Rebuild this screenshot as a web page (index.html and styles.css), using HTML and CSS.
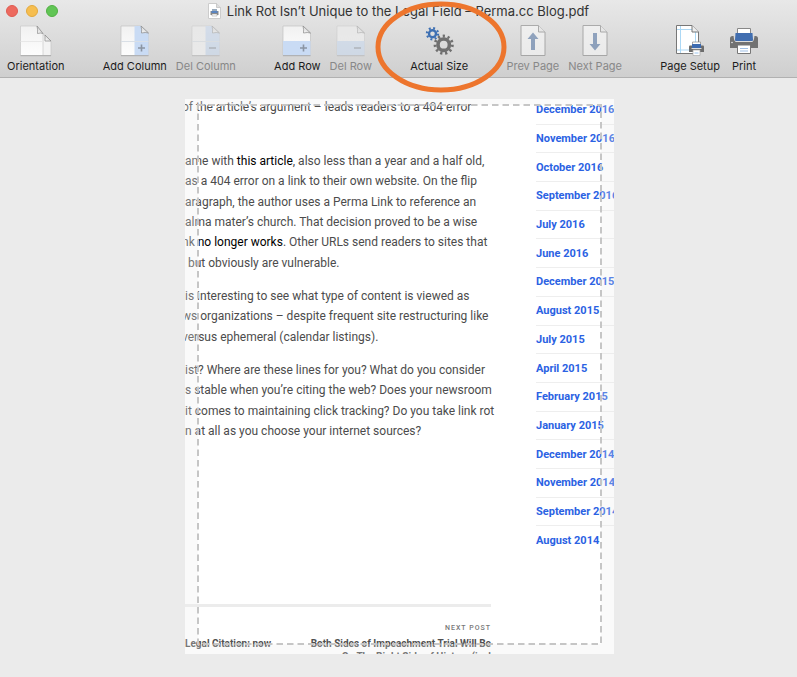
FILE: index.html
```html
<!DOCTYPE html>
<html lang="en">
<head>
<meta charset="utf-8">
<title>Link Rot Isn’t Unique to the Legal Field – Perma.cc Blog.pdf</title>
<link rel="stylesheet" href="styles.css">
</head>
<body>
<svg class="defs" aria-hidden="true">
  <defs>
    <linearGradient id="paper" x1="0" y1="0" x2="0" y2="1"><stop offset="0" stop-color="#f1f1f1"/><stop offset="1" stop-color="#fdfdfd"/></linearGradient>
    <linearGradient id="fold" x1="0" y1="1" x2="1" y2="0"><stop offset="0" stop-color="#fff"/><stop offset=".5" stop-color="#ddd"/><stop offset="1" stop-color="#999"/></linearGradient>
  </defs>
</svg>
<header class="chrome">
  <div class="titlebar">
    <div class="lights">
      <button class="light close" aria-label="Close"></button>
      <button class="light minimize" aria-label="Minimize"></button>
      <button class="light zoom" aria-label="Zoom"></button>
    </div>
    <h1 class="title">
      <svg width="13" height="16" viewBox="0 0 13 16" aria-hidden="true">
        <path d="M.5.5h8l4 4v11H.5z" fill="#fff" stroke="#ccc"/><path d="M8.500.5v4h4" fill="#ddd" stroke="#bbb" stroke-width=".7"/>
        <path d="M4 6h5v2H4z" fill="#9ab"/><path d="M2.500 8h8v4h-8z" fill="#888"/><path d="M3.500 8h6v2h-6z" fill="#5a85c2"/><path d="M4 11h5v2H4z" fill="#fff" stroke="#999" stroke-width=".5"/>
      </svg>
      <span>Link Rot Isn’t Unique to the Legal Field – Perma.cc Blog.pdf</span>
    </h1>
  </div>
  <div class="toolbar">
    <div class="group">
      <button class="tool">
        <svg width="32" height="33" viewBox="0 0 32 33" aria-hidden="true">
          <path d="M9 11h16l6 6v14.500H9z" fill="#f3f3f3" stroke="#c4c4c4" stroke-width=".7"/><path d="M25 11l6 6h-6z" fill="url(#fold)" stroke="#888" stroke-width=".7"/>
          <path d="M.5 2h16.500l6 7.500v22H.5z" fill="url(#paper)" stroke="#c8c8c8" stroke-width=".7"/><path d="M.5 17.500h22" stroke="#e8e8e8"/>
          <path d="M.5 31.700h30.500" stroke="#aaa"/><path d="M17 2q1 4 .5 7.500 3-1 5.500 0z" fill="url(#fold)" stroke="#888" stroke-width=".7"/>
        </svg>
        <span>Orientation</span>
      </button>
    </div>
    <div class="group">
      <button class="tool">
        <svg width="30" height="33" viewBox="0 0 30 33" aria-hidden="true">
          <path d="M1 2h20l7.500 7v22.500H1z" fill="url(#paper)" stroke="#c2c2c2" stroke-width=".7"/><path d="M14.500 2H21l7.500 7v22.500h-14z" fill="#c9dbf4"/>
          <path d="M1 17.500h27.500" stroke="#d9dfe6"/><path d="M1 31.700h27.500" stroke="#aaa"/><path d="M21 2q1 4 .5 7 4-1 7 0z" fill="url(#fold)" stroke="#888" stroke-width=".7"/>
          <path d="M18 24h7M21.500 20.500v7" stroke="#8b95a3" stroke-width="1.600"/>
        </svg>
        <span>Add Column</span>
      </button>
      <button class="tool" disabled>
        <svg width="30" height="33" viewBox="0 0 30 33" aria-hidden="true">
          <path d="M1 2h20l7.500 7v22.500H1z" fill="url(#paper)" stroke="#c2c2c2" stroke-width=".7"/><path d="M14.500 2H21l7.500 7v22.500h-14z" fill="#c9dbf4"/>
          <path d="M1 17.500h27.500" stroke="#d9dfe6"/><path d="M1 31.700h27.500" stroke="#aaa"/><path d="M21 2q1 4 .5 7 4-1 7 0z" fill="url(#fold)" stroke="#888" stroke-width=".7"/>
          <path d="M18 24h7" stroke="#8b95a3" stroke-width="1.600"/>
        </svg>
        <span>Del Column</span>
      </button>
    </div>
    <div class="group">
      <button class="tool">
        <svg width="30" height="33" viewBox="0 0 30 33" aria-hidden="true">
          <path d="M1 2h20l7.500 7v22.500H1z" fill="url(#paper)" stroke="#c2c2c2" stroke-width=".7"/><path d="M1 17h27.500v14.500H1z" fill="#c9dbf4"/>
          <path d="M1 31.700h27.500" stroke="#aaa"/><path d="M21 2q1 4 .5 7 4-1 7 0z" fill="url(#fold)" stroke="#888" stroke-width=".7"/>
          <path d="M18 24h7M21.500 20.500v7" stroke="#8b95a3" stroke-width="1.600"/>
        </svg>
        <span>Add Row</span>
      </button>
      <button class="tool" disabled>
        <svg width="30" height="33" viewBox="0 0 30 33" aria-hidden="true">
          <path d="M1 2h20l7.500 7v22.500H1z" fill="url(#paper)" stroke="#c2c2c2" stroke-width=".7"/><path d="M1 17h27.500v14.500H1z" fill="#c9dbf4"/>
          <path d="M1 31.700h27.500" stroke="#aaa"/><path d="M21 2q1 4 .5 7 4-1 7 0z" fill="url(#fold)" stroke="#888" stroke-width=".7"/>
          <path d="M18 24h7" stroke="#8b95a3" stroke-width="1.600"/>
        </svg>
        <span>Del Row</span>
      </button>
    </div>
    <div class="group">
      <button class="tool circled">
        <svg width="30" height="33" viewBox="0 0 30 33" aria-hidden="true">
          <g fill="none" stroke="#3e70b3"><circle cx="8.500" cy="9.700" r="3.500" stroke-width="2.400"/><circle cx="8.500" cy="9.700" r="5.600" stroke-width="2.200" stroke-dasharray="1.900 2.498"/></g>
          <g fill="none" stroke="#707070"><circle cx="19.700" cy="20.700" r="5.700" stroke-width="3.600"/><circle cx="19.700" cy="20.700" r="8.600" stroke-width="3" stroke-dasharray="2.200 2.712"/></g>
        </svg>
        <span>Actual Size</span>
        <svg class="marker" width="134" height="92" viewBox="0 0 134 92" aria-hidden="true"><ellipse cx="67" cy="46" rx="63" ry="43" fill="none" stroke="#ed752d" stroke-width="5"/></svg>
      </button>
    </div>
    <div class="group">
      <button class="tool" disabled>
        <svg width="26" height="33" viewBox="0 0 26 33" aria-hidden="true">
          <path d="M1 1.500h17.500l6.500 6.500v23.500H1z" fill="#fff" stroke="#777"/><path d="M18.500 1.500V8H25" fill="#eee" stroke="#777"/>
          <path d="M13 8.500l5.500 6.500h-3.500v11h-4V15H7.500z" fill="#44699f"/>
        </svg>
        <span>Prev Page</span>
      </button>
      <button class="tool" disabled>
        <svg width="26" height="33" viewBox="0 0 26 33" aria-hidden="true">
          <path d="M1 1.500h17.500l6.500 6.500v23.500H1z" fill="#fff" stroke="#777"/><path d="M18.500 1.500V8H25" fill="#eee" stroke="#777"/>
          <path d="M13 26.500l5.500-6.500h-3.500V9h-4v11H7.500z" fill="#44699f"/>
        </svg>
        <span>Next Page</span>
      </button>
    </div>
    <div class="group">
      <button class="tool">
        <svg width="30" height="33" viewBox="0 0 30 33" aria-hidden="true">
          <path d="M1.500 1.500h15.500l6.500 6.500v21.500h-22z" fill="#fff" stroke="#777"/><path d="M5.500 2v27M2 5.500h15M2 26h21M20.500 8v21" stroke="#acd8f5"/><path d="M17 1.500V8h6.500" fill="#eee" stroke="#777"/>
          <path d="M17.500 18h8v4h-8z" fill="#fff" stroke="#888" stroke-width=".7"/><path d="M15 21.500h13q1 0 1 1V28H14v-5.500q0-1 1-1z" fill="#6c6c6c"/><path d="M17 20h9v4h-9z" fill="#3d6bb0"/><path d="M16.500 24.500h10" stroke="#ddd"/>
          <path d="M18 26h7v5.500h-7z" fill="#fff" stroke="#aaa" stroke-width=".7"/><path d="M19.500 29h4" stroke="#9cc4ed"/>
        </svg>
        <span>Page Setup</span>
      </button>
      <button class="tool">
        <svg width="30" height="33" viewBox="0 0 30 33" aria-hidden="true">
          <path d="M8.500 4.500h13v9h-13z" fill="#fff" stroke="#888"/><path d="M3.500 12h23q2.500 0 2.500 2.500V24H1v-9.500Q1 12 3.500 12z" fill="#727272"/>
          <path d="M4.500 11.500h21q-.5 6.500-2.500 6.500H7q-2 0-2.500-6.500z" fill="#ddd"/><path d="M6.500 9h17l.5 7q0 1-1 1H7q-1 0-1-1z" fill="#416eb0"/>
          <path d="M8.500 21h13v8.500h-13z" fill="#fff" stroke="#777"/><path d="M11 24.500h8M11 27h8" stroke="#9fbfe5"/><circle cx="3" cy="18.500" r=".8" fill="#eee"/>
        </svg>
        <span>Print</span>
      </button>
    </div>
  </div>
</header>
<main class="preview">
  <div class="sheet">
    <article class="post">
      <p><span class="cut">of the article’s argument – leads readers to a 404 error</span></p>
      <p class="six">
        <span>ame with <a href="#article">this article</a>, also less than a year and a half old,</span>
        <span>as a 404 error on a link to their own website. On the flip</span>
        <span>aragraph, the author uses a Perma Link to reference an</span>
        <span>alma mater’s church. That decision proved to be a wise</span>
        <span class="cut">nk <a href="#works">no longer works</a>. Other URLs send readers to sites that</span>
        <span>&nbsp;but obviously are vulnerable.</span>
      </p>
      <p class="three">
        <span>is interesting to see what type of content is viewed as</span>
        <span class="cut">ws organizations – despite frequent site restructuring like</span>
        <span class="cut">versus ephemeral (calendar listings).</span>
      </p>
      <p class="four">
        <span>ist? Where are these lines for you? What do you consider</span>
        <span>s stable when you’re citing the web? Does your newsroom</span>
        <span>it comes to maintaining click tracking? Do you take link rot</span>
        <span>n at all as you choose your internet sources?</span>
      </p>
      <nav class="posts">
        <a class="prev" href="#prev">Legal Citation: now</a>
        <a class="next" href="#next"><small>NEXT POST</small>Both Sides of Impeachment Trial Will Be<br>On The Right Side of History (incl</a>
      </nav>
    </article>
    <ul class="archive">
      <li><a href="#a">December 2016</a></li>
      <li><a href="#a">November 2016</a></li>
      <li><a href="#a">October 2016</a></li>
      <li><a href="#a">September 2016</a></li>
      <li><a href="#a">July 2016</a></li>
      <li><a href="#a">June 2016</a></li>
      <li><a href="#a">December 2015</a></li>
      <li><a href="#a">August 2015</a></li>
      <li><a href="#a">July 2015</a></li>
      <li><a href="#a">April 2015</a></li>
      <li><a href="#a">February 2015</a></li>
      <li><a href="#a">January 2015</a></li>
      <li><a href="#a">December 2014</a></li>
      <li><a href="#a">November 2014</a></li>
      <li><a href="#a">September 2014</a></li>
      <li><a href="#a">August 2014</a></li>
    </ul>
    <div class="margins"><svg width="100%" height="100%" aria-hidden="true"><rect width="100%" height="100%" fill="none" stroke="#c6c6c6" stroke-width="2" stroke-dasharray="6.500 4"/></svg></div>
  </div>
</main>
</body>
</html>
```
FILE: styles.css
```css
* { box-sizing: border-box; }
body {
  margin: 0;
  height: 100vh;
  display: flex;
  flex-direction: column;
  background: #ebebeb;
  font-family: Inter, "Liberation Sans", sans-serif;
}
a { color: inherit; text-decoration: none; }
button { font: inherit; color: inherit; border: 0; padding: 0; background: none; }
.defs { position: absolute; width: 0; height: 0; }

.chrome {
  height: 78px;
  flex: none;
  background: linear-gradient(#e8e8e8, #cfcfcf);
  border-bottom: 1px solid #b1b1b1;
}
.titlebar {
  display: grid;
  grid-template-columns: 1fr auto 1fr;
  align-items: center;
  height: 22px;
  padding: 0 6px;
}
.lights { display: flex; gap: 8px; }
.light { width: 12px; height: 12px; border-radius: 50%; }
.close { background: #ed6a5f; border: 1px solid #e05b51; }
.minimize { background: #f6be50; border: 1px solid #e3aa3e; }
.zoom { background: #61c555; border: 1px solid #52b043; }
.title {
  display: flex;
  align-items: center;
  gap: 6px;
  margin: 0;
  font-size: 13px;
  font-weight: 400;
  color: #333;
  white-space: nowrap;
}
.toolbar {
  display: flex;
  justify-content: space-between;
  padding: 2px 38px 0 7px;
}
.group { display: flex; gap: 9px; }
.tool {
  position: relative;
  display: flex;
  flex-direction: column;
  align-items: center;
  gap: 2px;
  font-size: 11px;
  line-height: 14px;
  color: #1c1c1c;
  white-space: nowrap;
}
.tool:disabled { color: #888; }
.tool:disabled svg { opacity: .5; }
.marker { position: absolute; z-index: 2; left: -36px; top: -23px; }

.preview {
  flex: 1;
  min-height: 0;
  display: flex;
  padding: 21px 183px 23px 185px;
}
.sheet {
  position: relative;
  flex: 1;
  min-width: 0;
  display: grid;
  grid-template-columns: minmax(0, 1fr) 78px;
  align-items: start;
  gap: 45px;
  overflow: hidden;
  background: #fff;
  font-family: Roboto, sans-serif;
  white-space: nowrap;
}
.post { margin-top: -2px; font-size: 12px; line-height: 20px; color: #4c4c4c; }
.post p { display: grid; grid-auto-rows: 1fr; margin: 0 0 13px; }
.post p:first-child { margin-bottom: 34px; }
.post p a { color: #000; }
.post .six { height: 122px; }
.post .three { height: 61px; }
.post .four { height: 81px; }
.cut { margin-left: -3px; }
.posts {
  display: flex;
  justify-content: space-between;
  align-items: start;
  margin-top: 163px;
  padding-top: 15px;
  border-top: 3px solid #ececec;
  font-size: 10px;
  font-weight: 700;
  line-height: 13px;
  color: #505050;
}
.prev { margin-top: 15px; }
.next { text-align: right; }
.next small {
  display: block;
  margin-bottom: 3px;
  font-size: 7px;
  line-height: 12px;
  font-weight: 500;
  letter-spacing: 1px;
  color: #777;
}
.archive {
  display: grid;
  grid-auto-rows: 1fr;
  height: 459px;
  margin: -3px 0 0;
  padding: 0;
  list-style: none;
  font-size: 11px;
  font-weight: 700;
  color: #2b62e3;
}
.archive li { display: flex; align-items: center; border-bottom: 1px solid #eee; }
.archive li:last-child { border-bottom: 0; }

.margins {
  position: absolute;
  inset: 6px 13px 10px 13px;
  box-shadow: 0 0 0 20px rgba(235, 235, 235, .25);
}
.margins svg { display: block; overflow: visible; }
```
